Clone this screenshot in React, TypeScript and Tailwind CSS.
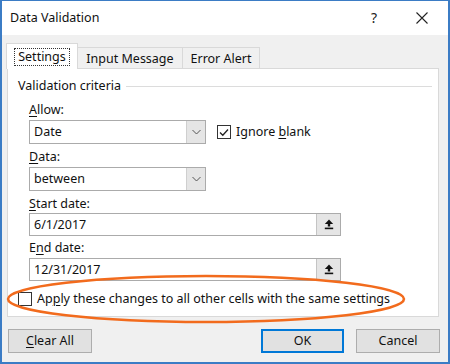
import { ReactNode } from 'react';

// underline for the accelerator letter
function Acc({ children }: { children: ReactNode }) {
  return <span className="underline underline-offset-[2px] decoration-1">{children}</span>;
}

function Checkbox({ checked = false }: { checked?: boolean }) {
  return (
    <div className="w-[14px] h-[14px] border border-[#333333] bg-white flex items-center justify-center shrink-0">
      {checked && (
        <svg width="10" height="9" viewBox="0 0 10 9">
          <path d="M1 4.5 L3.8 7.3 L9 1.5" fill="none" stroke="#222" strokeWidth="1.3" />
        </svg>
      )}
    </div>
  );
}

function Dropdown({ value }: { value: string }) {
  return (
    <div className="w-[177px] h-[24px] flex border border-[#ababab] bg-white shrink-0">
      <div className="flex-1 flex items-center pl-[4px]">{value}</div>
      <div className="w-[19px] h-full bg-[#e5e5e5] border-l border-[#cfcfcf] flex items-center justify-center">
        <svg width="9" height="6" viewBox="0 0 9 6">
          <path d="M0.5 1 L4.5 5 L8.5 1" fill="none" stroke="#555" strokeWidth="1" />
        </svg>
      </div>
    </div>
  );
}

function RefInput({ value }: { value: string }) {
  return (
    <div className="w-[312px] h-[23px] flex border border-[#ababab] bg-white">
      <div className="flex-1 flex items-center pl-[4px]">{value}</div>
      <div className="w-[24px] h-full bg-[#e5e5e5] border-l border-[#c4c4c4] flex items-center justify-center">
        <svg width="10" height="11" viewBox="0 0 10 11">
          <polygon points="5,0.5 0.8,5 9.2,5" fill="#111" />
          <rect x="3.8" y="4.5" width="2.4" height="3" fill="#111" />
          <rect x="0.8" y="8.6" width="8.4" height="1.6" fill="#111" />
        </svg>
      </div>
    </div>
  );
}

function Button({ children, primary = false, className = '' }: { children: ReactNode; primary?: boolean; className?: string }) {
  return (
    <div
      className={`h-[24px] flex items-center justify-center bg-[#e1e1e1] ${
        primary ? 'border-2 border-[#0078d7]' : 'border border-[#adadad]'
      } ${className}`}
    >
      {children}
    </div>
  );
}

export default function App() {
  return (
    <div className="relative w-[450px] h-[364px] border-x-2 border-b-2 border-t border-[#3b7cc5] bg-[#f0f0f0] flex flex-col font-['Noto_Sans',sans-serif] text-[12.5px] leading-[14px] text-[#111]">
      {/* Title bar */}
      <div className="h-[34px] bg-white flex items-center pl-[8px] shrink-0">
        <span className="text-[12.5px] text-[#111]">Data Validation</span>
        <span className="ml-auto text-[14px] text-[#222]">?</span>
        <svg className="ml-[39px] mr-[20px]" width="12" height="12" viewBox="0 0 12 12">
          <path d="M0.5 0.5 L11.5 11.5 M11.5 0.5 L0.5 11.5" stroke="#222" strokeWidth="1.1" />
        </svg>
      </div>

      <div className="flex-1 flex flex-col pl-[4px] pr-[7px]">
        {/* Tabs */}
        <div className="mt-[8px] h-[26px] flex items-end shrink-0">
          <div className="relative z-10 w-[72px] h-[26px] bg-white border border-b-0 border-[#d9d9d9] flex items-center justify-center">
            <span className="px-[3px] py-[1px] border border-dotted border-[#333]">Settings</span>
          </div>
          <div className="w-[105px] h-[22px] border border-l-0 border-[#d9d9d9] flex items-center justify-center pt-[1px]">
            Input Message
          </div>
          <div className="w-[77px] h-[22px] border border-l-0 border-[#d9d9d9] flex items-center justify-center pt-[1px]">
            Error Alert
          </div>
        </div>

        {/* Settings panel */}
        <div className="h-[249px] -mt-px ml-[1px] mr-[2px] bg-white border border-[#d9d9d9] flex flex-col shrink-0">
          <div className="mt-[10px] h-[14px] flex items-center pl-[10px]">
            <span>Validation criteria</span>
            <div className="flex-1 h-px bg-[#dcdcdc] ml-[5px] mr-[6px]" />
          </div>

          <div className="mt-[10px] h-[14px] pl-[21px]">
            <Acc>A</Acc>llow:
          </div>
          <div className="mt-[3px] flex items-center pl-[21px]">
            <Dropdown value="Date" />
            <div className="ml-[11px] flex items-center">
              <Checkbox checked />
              <span className="ml-[5px]">
                Ignore <Acc>b</Acc>lank
              </span>
            </div>
          </div>

          <div className="mt-[6px] h-[14px] pl-[21px]">
            <Acc>D</Acc>ata:
          </div>
          <div className="mt-[3px] pl-[21px]">
            <Dropdown value="between" />
          </div>

          <div className="mt-[6px] h-[14px] pl-[21px]">
            <Acc>S</Acc>tart date:
          </div>
          <div className="mt-[2px] pl-[21px]">
            <RefInput value="6/1/2017" />
          </div>

          <div className="mt-[5px] h-[14px] pl-[21px]">
            E<Acc>n</Acc>d date:
          </div>
          <div className="mt-[3px] pl-[21px]">
            <RefInput value="12/31/2017" />
          </div>

          <div className="mt-[11px] h-[14px] flex items-center pl-[10px]">
            <Checkbox />
            <span className="ml-[5px]">
              Ap<Acc>p</Acc>ly these changes to all other cells with the same settings
            </span>
          </div>
        </div>

        {/* Buttons */}
        <div className="mt-[12px] flex shrink-0">
          <Button className="ml-[2px] w-[84px]">
            <span>
              <Acc>C</Acc>lear All
            </span>
          </Button>
          <Button primary className="ml-auto w-[83px]">
            OK
          </Button>
          <Button className="ml-[12px] mr-[1px] w-[84px]">Cancel</Button>
        </div>
      </div>

      {/* Orange highlight ellipse */}
      <svg className="absolute inset-0 pointer-events-none" width="446" height="361" viewBox="0 0 446 361">
        <ellipse cx="204" cy="298" rx="198" ry="23" fill="none" stroke="#f26b1d" strokeWidth="2.6" />
      </svg>
    </div>
  );
}
